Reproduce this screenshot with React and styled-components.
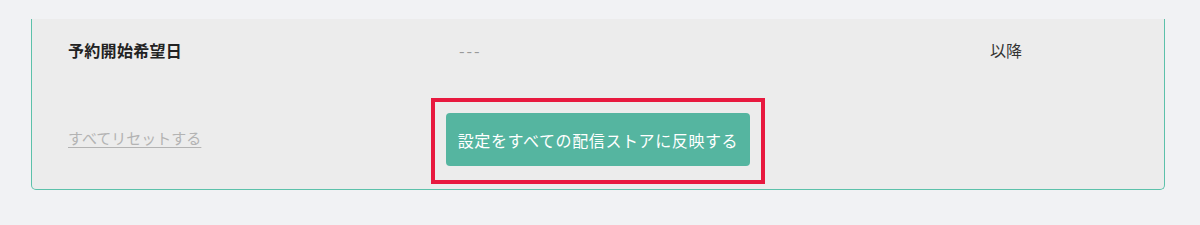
import React from "react";
import styled, { createGlobalStyle } from "styled-components";

const GlobalStyle = createGlobalStyle`
  html, body {
    margin: 0;
    padding: 0;
    background: #f1f2f4;
    font-family: "Noto Sans CJK JP", "Noto Sans", sans-serif;
  }
`;

const Page = styled.div`
  height: 225px;
  padding: 19px 35px 0 31px;
  box-sizing: border-box;
  background: #f1f2f4;
`;

const Card = styled.section`
  background: #ececec;
  border: 1px solid #5cc1aa;
  border-top: none;
  border-radius: 0 0 5px 5px;
  padding: 0 0 5px 36px;
`;

const InfoRow = styled.div`
  display: flex;
  align-items: center;
  height: 62px;
`;

const Label = styled.div`
  width: 391px;
  font-size: 16px;
  font-weight: 700;
  letter-spacing: 0.3px;
  color: #222;
`;

const Value = styled.div`
  width: 531px;
  font-size: 16px;
  color: #999;
  letter-spacing: 2px;
`;

const Suffix = styled.div`
  font-size: 16px;
  color: #333;
`;

const ActionRow = styled.div`
  display: flex;
  align-items: center;
  margin-top: 17px;
`;

const ResetLink = styled.a`
  width: 363px;
  font-size: 15px;
  color: #b3b3b3;
  text-decoration: underline;
  text-underline-offset: 3px;
  cursor: pointer;
  padding-bottom: 8px;
`;

const Highlight = styled.div`
  border: 4px solid #e8193f;
  padding: 11px 11px 14px 11px;
`;

const ApplyButton = styled.button`
  width: 304px;
  height: 53px;
  border: none;
  border-radius: 4px;
  background: #55b5a0;
  color: #fff;
  font-family: inherit;
  font-size: 16px;
  letter-spacing: 0.6px;
  cursor: pointer;
`;

export default function App() {
  return (
    <>
      <GlobalStyle />
      <Page>
        <Card>
          <InfoRow>
            <Label>予約開始希望日</Label>
            <Value>---</Value>
            <Suffix>以降</Suffix>
          </InfoRow>
          <ActionRow>
            <ResetLink>すべてリセットする</ResetLink>
            <Highlight>
              <ApplyButton type="button">設定をすべての配信ストアに反映する</ApplyButton>
            </Highlight>
          </ActionRow>
        </Card>
      </Page>
    </>
  );
}
